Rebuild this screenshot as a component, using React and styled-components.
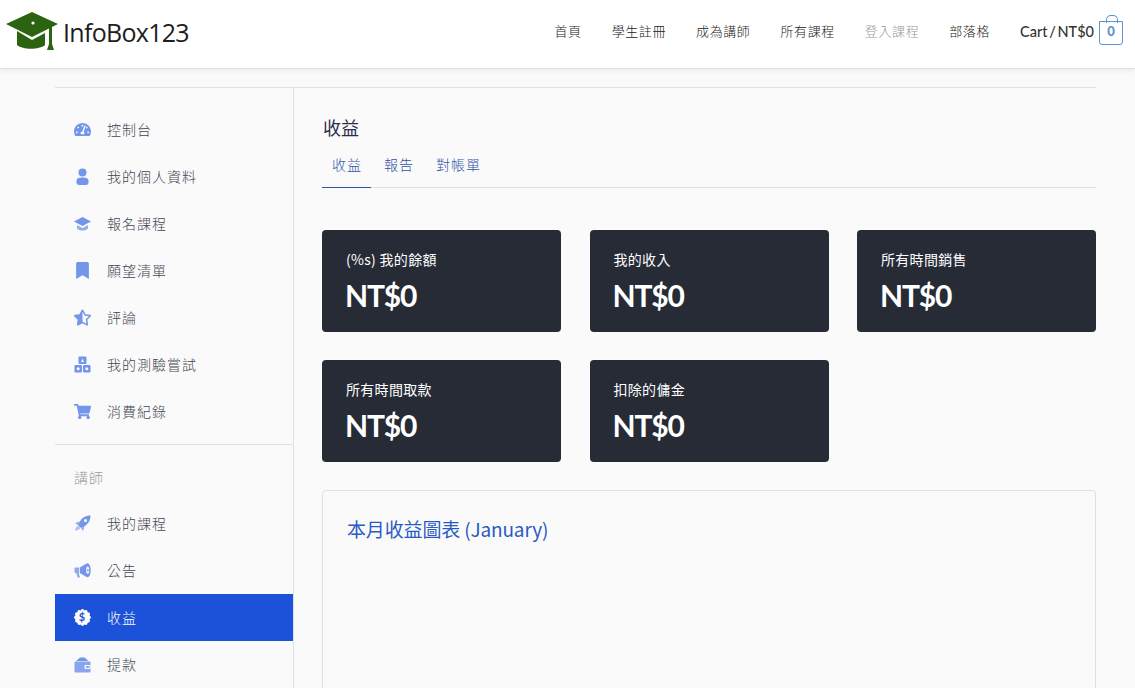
import styled, { createGlobalStyle } from 'styled-components';
import {
  FaTachometerAlt,
  FaBookmark,
  FaStarHalfAlt,
  FaShoppingCart,
} from 'react-icons/fa';

const GlobalStyle = createGlobalStyle`
  html, body {
    margin: 0;
    padding: 0;
    height: 100%;
    overflow: hidden;
    background: #fafafa;
    font-family: "Noto Sans CJK TC", "Noto Sans", sans-serif;
  }
  * { box-sizing: border-box; }
`;

const Page = styled.div`
  height: 688px;
  overflow: hidden;
  background: #fafafa;
`;

const Header = styled.header`
  height: 69px;
  background: #fff;
  border-bottom: 1px solid #e2e2e2;
  box-shadow: 0 1px 6px rgba(0, 0, 0, 0.08);
  display: flex;
  align-items: center;
  justify-content: space-between;
  padding: 0 0 8px 6px;
  position: relative;
`;

const Logo = styled.div`
  display: flex;
  align-items: center;
  gap: 5px;
  margin-top: 3px;
`;

const LogoText = styled.span`
  font-family: "Open Sans", sans-serif;
  font-size: 25px;
  letter-spacing: -0.7px;
  color: #1d1d1d;
  margin-top: 1px;
`;

const Nav = styled.nav`
  display: flex;
  align-items: center;
  padding-right: 12px;
`;

const NavLink = styled.a`
  font-size: 13px;
  letter-spacing: 0.6px;
  font-weight: 300;
  color: ${p => (p.$muted ? '#999' : '#222')};
  margin-right: 30px;
`;

const CartLabel = styled.span`
  font-family: Lato, sans-serif;
  font-size: 14.5px;
  font-weight: 500;
  word-spacing: -2px;
  color: #333;
  margin-top: 2px;
  margin-right: 5px;
`;

const Bag = styled.div`
  width: 24px;
  height: 24px;
  margin-top: 5px;
  padding-bottom: 3px;
  border: 1px solid #5b93cf;
  border-radius: 0 0 3px 3px;
  position: relative;
  font-family: Lato, sans-serif;
  font-size: 13px;
  font-weight: 900;
  color: #5b93cf;
  display: flex;
  align-items: center;
  justify-content: center;

  &::before {
    content: '';
    position: absolute;
    top: -7px;
    left: 6px;
    width: 10px;
    height: 7px;
    border: 1px solid #5b93cf;
    border-bottom: none;
    border-radius: 5px 5px 0 0;
  }
`;

const Container = styled.div`
  width: 1041px;
  margin: 18px 0 0 55px;
  border-top: 1px solid #dfe1e5;
  display: grid;
  grid-template-columns: 239px 1fr;
`;

const Sidebar = styled.aside`
  border-right: 1px solid #dfe1e5;
  padding-top: 18px;
`;

const SideItem = styled.a`
  height: 47px;
  display: flex;
  align-items: center;
  gap: 16px;
  padding: 0 0 2px 19px;
  font-size: 14px;
  font-weight: 300;
  letter-spacing: 1px;
  background: ${p => (p.$active ? '#1c52d9' : 'transparent')};
  color: ${p => (p.$active ? '#fff' : '#3f4652')};

  svg {
    width: 17px;
    height: 17px;
    margin-top: 2px;
    flex: none;
    color: ${p => (p.$active ? '#fff' : '#7396ea')};
  }
`;

const SideDivider = styled.div`
  border-top: 1px solid #dfe1e5;
  margin-top: 9px;
`;

const SideHeading = styled.div`
  height: 55px;
  padding: 22px 0 0 19px;
  font-size: 14px;
  font-weight: 300;
  line-height: 20px;
  letter-spacing: 1px;
  color: #9a9a9a;
`;

const Main = styled.main`
  padding: 27px 0 0 28px;
`;

const Title = styled.h2`
  margin: 0 0 0 1px;
  font-size: 18px;
  line-height: 24px;
  font-weight: 400;
  color: #2b2d4d;
`;

const Tabs = styled.div`
  display: flex;
  margin-top: 3px;
  border-bottom: 1px solid #dfe1e5;
`;

const Tab = styled.a`
  height: ${p => (p.$active ? '46px' : '45px')};
  padding: 11px 22px 0 0;
  font-size: 14px;
  font-weight: 300;
  line-height: 22px;
  letter-spacing: 1px;
  color: #2f53a7;
  ${p => p.$active && `
    padding: 11px 9px 0 10px;
    margin-right: 13px;
    margin-bottom: -1px;
    border-bottom: 1px solid #2f53a7;
  `}
`;

const Cards = styled.div`
  display: grid;
  grid-template-columns: repeat(3, 239px);
  justify-content: space-between;
  row-gap: 28px;
  margin-top: 42px;
`;

const Card = styled.div`
  height: 102px;
  background: #272b36;
  border-radius: 4px;
  padding: 19px 24px;
  color: #fff;
`;

const CardLabel = styled.div`
  font-size: 14px;
  line-height: 20px;
  font-weight: 400;
  letter-spacing: 0.3px;
`;

const CardValue = styled.div`
  margin: 8px 0 0 -1px;
  font-family: Lato, sans-serif;
  font-size: 30px;
  line-height: 36px;
  font-weight: 700;
  letter-spacing: -1.2px;
`;

const ChartPanel = styled.section`
  margin-top: 28px;
  height: 420px;
  border: 1px solid #dfe1e5;
  border-radius: 4px;
  padding: 23px 24px;
`;

const ChartTitle = styled.h3`
  margin: 0;
  font-size: 19px;
  line-height: 30px;
  font-weight: 400;
  letter-spacing: -0.15px;
  color: #2a5bc4;
`;

const navLinks = [
  { label: '首頁' },
  { label: '學生註冊' },
  { label: '成為講師' },
  { label: '所有課程' },
  { label: '登入課程', muted: true },
  { label: '部落格' },
];

function UserIcon() {
  return (
    <svg viewBox="0 0 17 17">
      <circle cx="8.5" cy="4.5" r="4" fill="currentColor" />
      <path d="M2.5 13 C2.5 10 5 9.5 8.5 9.5 C12 9.5 14.5 10 14.5 13 L14.5 14.5 C14.5 16 13.5 17 12 17 L5 17 C3.5 17 2.5 16 2.5 14.5 Z" fill="currentColor" />
    </svg>
  );
}

function CapIcon() {
  return (
    <svg viewBox="0 0 17 17">
      <path d="M8.5 2 L17 6.5 L8.5 11 L0 6.5 Z" fill="currentColor" />
      <path d="M3 10 L8.5 13 L14 10 L14 13.5 C12 16.2 5 16.2 3 13.5 Z" fill="currentColor" opacity="0.75" />
    </svg>
  );
}

function QuizIcon() {
  return (
    <svg viewBox="0 0 17 17">
      <rect x="4.5" y="0.5" width="8" height="7.5" rx="1" fill="currentColor" />
      <rect x="0.5" y="9" width="7.5" height="7.5" rx="1" fill="currentColor" />
      <rect x="9" y="9" width="7.5" height="7.5" rx="1" fill="currentColor" />
      <path d="M7 6 L8.5 2.5 L10 6 Z" fill="#fafafa" />
      <circle cx="4.2" cy="12.8" r="1.5" fill="#fafafa" />
      <circle cx="12.8" cy="12.8" r="1.5" fill="#fafafa" />
    </svg>
  );
}

function RocketIcon() {
  return (
    <svg viewBox="0 0 17 17">
      <path d="M16.5 0.5 C12 0.5 8 2.5 5.5 7 L4 10 L7 13 L10 11.5 C14.5 9 16.5 5 16.5 0.5 Z" fill="currentColor" />
      <circle cx="11.5" cy="5.5" r="1.5" fill="#fafafa" />
      <path d="M1 15.5 C1 13.5 2.5 11.5 4 10.5 L6.5 13 C5.5 14.5 3 16 1 15.5 Z" fill="currentColor" opacity="0.55" />
      <path d="M1 8 L5.5 6.5 L4 10 Z M9 16 L10.5 11.5 L7 13 Z" fill="currentColor" opacity="0.8" />
    </svg>
  );
}

function HornIcon() {
  return (
    <svg viewBox="0 0 17 17">
      <path d="M0.5 6.5 C0.5 5.8 1 5.5 1.5 5.5 L5 5.5 L5 11 L4.7 11 L6 15.5 L3.5 15.5 L2.3 11 L1.5 11 C1 11 0.5 10.6 0.5 10 Z" fill="currentColor" opacity="0.8" />
      <path d="M5.8 5.4 L12.5 1.5 L12.5 15 L5.8 11.1 Z" fill="currentColor" />
      <ellipse cx="13.5" cy="8.2" rx="3.2" ry="7" fill="currentColor" />
      <ellipse cx="13.7" cy="8.2" rx="1.5" ry="3.6" fill="#fafafa" />
      <circle cx="13.9" cy="8.2" r="1" fill="currentColor" />
    </svg>
  );
}

function WalletIcon() {
  return (
    <svg viewBox="0 0 17 17">
      <path d="M2 5 L6 1.5 L10.5 1.5 L14.5 5 Z" fill="currentColor" />
      <rect x="0.5" y="5.5" width="16" height="11" rx="1" fill="currentColor" opacity="0.85" />
      <rect x="10.5" y="9" width="6" height="4" rx="1" fill="#fafafa" />
      <rect x="12" y="10.2" width="3.5" height="1.6" fill="currentColor" />
    </svg>
  );
}

const badgeAngles = [0, 30, 60, 90, 120, 150, 180, 210, 240, 270, 300, 330];

function EarningIcon() {
  return (
    <svg viewBox="0 0 17 17">
      <circle cx="8.5" cy="8.5" r="7.4" fill="currentColor" />
      {badgeAngles.map(a => (
        <circle
          key={a}
          cx={8.5 + 7 * Math.cos((a * Math.PI) / 180)}
          cy={8.5 + 7 * Math.sin((a * Math.PI) / 180)}
          r="1.4"
          fill="currentColor"
        />
      ))}
      <text x="8.5" y="12.3" textAnchor="middle" fontSize="11" fontWeight="700" fontFamily="Lato, sans-serif" fill="#1c52d9">$</text>
    </svg>
  );
}

const studentItems = [
  { label: '控制台', icon: FaTachometerAlt },
  { label: '我的個人資料', icon: UserIcon },
  { label: '報名課程', icon: CapIcon },
  { label: '願望清單', icon: FaBookmark },
  { label: '評論', icon: FaStarHalfAlt },
  { label: '我的測驗嘗試', icon: QuizIcon },
  { label: '消費紀錄', icon: FaShoppingCart },
];

const teacherItems = [
  { label: '我的課程', icon: RocketIcon },
  { label: '公告', icon: HornIcon },
  { label: '收益', icon: EarningIcon, active: true },
  { label: '提款', icon: WalletIcon },
];

const stats = ['(%s) 我的餘額', '我的收入', '所有時間銷售', '所有時間取款', '扣除的傭金'];

function LogoMark() {
  return (
    <svg width="52" height="39" viewBox="0 0 52 39">
      <path d="M26 0 L52 12 L46 15 L46 32 L48 38 L41 38 L43 32 L43 16.5 L26 25 L0 12 Z" fill="#2c6310" />
      <path d="M11 19 L26 28 L39 21 L39 33 C33 38 17 38 11 33 Z" fill="#2c6310" />
      <circle cx="27" cy="11" r="1.6" fill="#fff" />
    </svg>
  );
}

function SideLink({ item }) {
  const Icon = item.icon;
  return (
    <SideItem $active={item.active}>
      <Icon />
      {item.label}
    </SideItem>
  );
}

export default function App() {
  return (
    <Page>
      <GlobalStyle />
      <Header>
        <Logo>
          <LogoMark />
          <LogoText>InfoBox123</LogoText>
        </Logo>
        <Nav>
          {navLinks.map(link => (
            <NavLink key={link.label} $muted={link.muted}>{link.label}</NavLink>
          ))}
          <CartLabel>Cart / NT$0</CartLabel>
          <Bag>0</Bag>
        </Nav>
      </Header>
      <Container>
        <Sidebar>
          {studentItems.map(item => <SideLink key={item.label} item={item} />)}
          <SideDivider />
          <SideHeading>講師</SideHeading>
          {teacherItems.map(item => <SideLink key={item.label} item={item} />)}
        </Sidebar>
        <Main>
          <Title>收益</Title>
          <Tabs>
            <Tab $active>收益</Tab>
            <Tab>報告</Tab>
            <Tab>對帳單</Tab>
          </Tabs>
          <Cards>
            {stats.map(label => (
              <Card key={label}>
                <CardLabel>{label}</CardLabel>
                <CardValue>NT$0</CardValue>
              </Card>
            ))}
          </Cards>
          <ChartPanel>
            <ChartTitle>本月收益圖表 (January)</ChartTitle>
          </ChartPanel>
        </Main>
      </Container>
    </Page>
  );
}
